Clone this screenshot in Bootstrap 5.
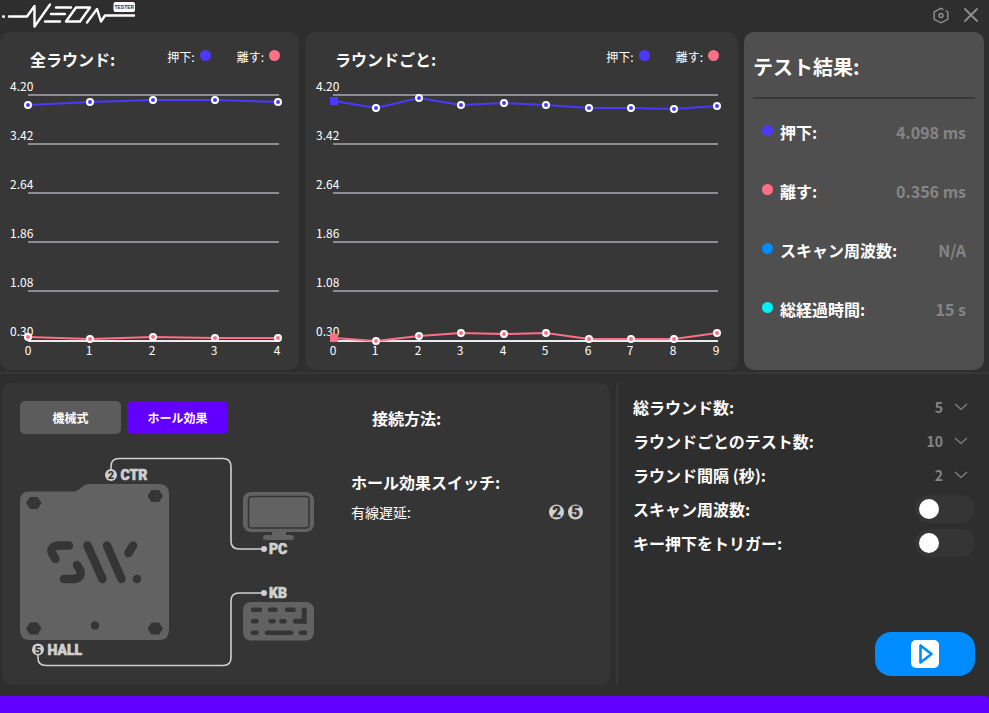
<!DOCTYPE html>
<html lang="ja">
<head>
<meta charset="utf-8">
<meta name="viewport" content="width=device-width, initial-scale=1">
<title>NEON Tester</title>
<link href="https://cdn.jsdelivr.net/npm/bootstrap@5.3.0/dist/css/bootstrap.min.css" rel="stylesheet">
<style>
body{background:#2e2e2e;color:#fff;font-family:"Noto Sans CJK JP",sans-serif;font-size:16px;line-height:24px}
svg{display:block}
h1,h2{font-size:16px;line-height:24px;font-weight:700;margin:0}
.titlebar{height:32px;padding:0 10px 0 0}
.title-actions{gap:11px}
.icon-btn{border:0;background:none;padding:0;color:#8f8f8f}
.top-row{gap:6px;padding-right:5px}
.panel{background:#373737;border-radius:10px;min-width:0;flex:1 1 0}
.panel-rounds{flex-grow:299}
.panel-tests{flex-grow:433}
.panel-results{flex-grow:222;background:#4f4f4f;padding:20px 9px}
.panel-head{height:44px;padding:15px 19px 0 30px}
.legend{font-size:12px;line-height:20px;gap:26px}
.legend-item{gap:5px}
.dot{width:11px;height:11px;border-radius:50%;flex:none;margin-bottom:4px}
.blue{background:#4c38ff}.pink{background:#ff6f87}.sky{background:#008cff}.cyan{background:#00f2ff}
.chart{width:100%;height:auto;font-size:12px;fill:#fff}
.gridline{stroke:#8e8c92;stroke-width:2}
.axis{stroke:#e9e9ee;stroke-width:2}
.series{fill:none;stroke-width:2}
.results-title{font-size:20px;line-height:30px;padding-bottom:15px;border-bottom:2px solid #373737}
.result-list{padding:21px 9px 0;gap:35px}
.result-name{gap:7px}
.value{color:#858585;font-weight:700}
.rule{height:2px;background:#373737;margin:2px 0 9px}
.bottom-row{padding:0 14px 11px 2px;gap:6px}
.wiring{flex:563 1 0;background:#353535;border-radius:10px;padding:18px 27px 17px 18px;gap:36px}
.tabs{gap:6px}
.tab-btn{width:101px;height:33px;border:0;border-radius:5px;background:#5c5c5c;color:#fff;font-size:12px;font-weight:700;line-height:18px}
.tab-btn.active{background:#6200ff}
.diagram{margin-top:22px}
.diagram text{font:900 14px Roboto,sans-serif;fill:#d0d0d0}
.diagram .node-name{stroke:#d0d0d0;stroke-width:.6px}
.diagram .pin-no{font-size:11px;fill:#353535;text-anchor:middle}
.method-title{padding:5px 0 0 21px;margin-bottom:40px}
.small-label{font-size:14px;line-height:20px}
.settings{flex:342 1 0;border-left:2px solid #373737;padding:7px 0 9px 15px}
.setting{height:34px}
.setting label{font-weight:700}
.picker{gap:11px;padding-right:7px}
.picker select{appearance:none;background:none;border:0;color:#858585;font:700 14px "Noto Sans CJK JP",sans-serif;text-align-last:right;padding:0;width:50px}
.picker select option{color:#222}
.toggle{appearance:none;width:60px;height:28px;border-radius:14px;background:#353535;padding:4px;margin:0}
.toggle::before{content:"";display:block;width:20px;height:20px;border-radius:50%;background:#fff}
.toggle:checked{background:#008cff}
.toggle:checked::before{margin-left:auto}
.start-btn{width:100px;height:44px;border:0;border-radius:16px;background:#008cff}
.status{height:17px;background:#6200ff;border-radius:0 4px 0 0}
</style>
<script src="https://cdn.jsdelivr.net/npm/bootstrap@5.3.0/dist/js/bootstrap.bundle.min.js"></script>
</head>
<body class="d-flex flex-column min-vh-100">
<header class="titlebar d-flex justify-content-between align-items-center">
<svg width="140" height="32" role="img" aria-label="NEON Tester">
<g fill="none" stroke="#fff" stroke-width="2.4" stroke-linejoin="round" stroke-linecap="round">
<path d="M9 16.500H27L34.500 6V26.500L50 4.500"/><path d="M56 7.500H71M51 14H65M45 21.500H60"/>
<path d="M76 7.500H90L80 21.500H66Z"/><path d="M87 22.500 97 9 101 21.500 105 15.500H134"/></g>
<circle cx="3.500" cy="16.500" r="1.500" fill="#fff"/>
<rect x="113.500" y="2" width="21.500" height="10" rx="2" fill="#fff"/>
<text x="124.300" y="9" text-anchor="middle" font-family="Liberation Sans,sans-serif" font-size="5" font-weight="700" fill="#333">TESTER</text>
</svg>
<div class="title-actions d-flex align-items-center">
<button class="icon-btn" type="button" aria-label="設定"><svg width="22" height="22" fill="none" stroke="currentColor" stroke-width="1.400" stroke-linecap="round"><path d="M13 4.300 11 3.300 4.200 7V14.300L11 17.800 17.800 14.300V7L16 6"/><circle cx="11" cy="10.500" r="2"/></svg></button>
<button class="icon-btn" type="button" aria-label="閉じる"><svg width="16" height="22" fill="none" stroke="currentColor" stroke-width="1.800" stroke-linecap="round"><path d="M2 4 14 16M14 4 2 16"/></svg></button>
</div>
</header>

<main class="flex-grow-1 d-flex flex-column">
<div class="top-row d-flex">
<section class="panel panel-rounds">
<div class="panel-head d-flex justify-content-between align-items-start">
<h1>全ラウンド:</h1>
<div class="legend d-flex"><span class="legend-item d-flex align-items-center">押下:<i class="dot blue"></i></span><span class="legend-item d-flex align-items-center">離す:<i class="dot pink"></i></span></div>
</div>
<svg class="chart" viewBox="0 0 299 294" role="img" aria-label="全ラウンド">
<defs>
<marker id="ptBlue" markerUnits="userSpaceOnUse" markerWidth="10" markerHeight="10" refX="5" refY="5"><circle cx="5" cy="5" r="3" fill="#4c38ff" stroke="#fff" stroke-width="2"/></marker>
<marker id="ptPink" markerUnits="userSpaceOnUse" markerWidth="10" markerHeight="10" refX="5" refY="5"><circle cx="5" cy="5" r="3" fill="#ff6f87" stroke="#fff" stroke-width="2"/></marker>
<marker id="sqBlue" markerUnits="userSpaceOnUse" markerWidth="8" markerHeight="8" refX="4" refY="4"><path d="M0 0H8V8H0Z" fill="#4c38ff"/></marker>
<marker id="sqPink" markerUnits="userSpaceOnUse" markerWidth="8" markerHeight="8" refX="4" refY="4"><path d="M0 0H8V8H0Z" fill="#ff6f87"/></marker>
</defs>
<path class="gridline" d="M28 19H279M28 68H279M28 117H279M28 166H279M28 215H279"/>
<path class="axis" d="M28 265H279"/>
<g><text x="10" y="15">4.20</text><text x="10" y="64">3.42</text><text x="10" y="113">2.64</text><text x="10" y="162">1.86</text><text x="10" y="211">1.08</text><text x="10" y="260">0.30</text></g>
<g text-anchor="middle"><text x="28" y="279">0</text><text x="89" y="279">1</text><text x="152" y="279">2</text><text x="214" y="279">3</text><text x="277" y="279">4</text></g>
<polyline class="series" stroke="#4c38ff" marker-start="url(#ptBlue)" marker-mid="url(#ptBlue)" marker-end="url(#ptBlue)" points="28,29 90,26 153,24 215,24 278,26"/>
<polyline class="series" stroke="#ff6f87" marker-start="url(#ptPink)" marker-mid="url(#ptPink)" marker-end="url(#ptPink)" points="28,261 90,263 153,261 215,262 278,262"/>
</svg>
</section>

<section class="panel panel-tests">
<div class="panel-head d-flex justify-content-between align-items-start">
<h1>ラウンドごと:</h1>
<div class="legend d-flex"><span class="legend-item d-flex align-items-center">押下:<i class="dot blue"></i></span><span class="legend-item d-flex align-items-center">離す:<i class="dot pink"></i></span></div>
</div>
<svg class="chart" viewBox="0 0 433 294" role="img" aria-label="ラウンドごと">
<path class="gridline" d="M28 19H413M28 68H413M28 117H413M28 166H413M28 215H413"/>
<path class="axis" d="M28 265H413"/>
<g><text x="11" y="15">4.20</text><text x="11" y="64">3.42</text><text x="11" y="113">2.64</text><text x="11" y="162">1.86</text><text x="11" y="211">1.08</text><text x="11" y="260">0.30</text></g>
<g text-anchor="middle"><text x="28" y="279">0</text><text x="70" y="279">1</text><text x="113" y="279">2</text><text x="155" y="279">3</text><text x="198" y="279">4</text><text x="240" y="279">5</text><text x="283" y="279">6</text><text x="325" y="279">7</text><text x="368" y="279">8</text><text x="411" y="279">9</text></g>
<polyline class="series" stroke="#4c38ff" marker-start="url(#sqBlue)" marker-mid="url(#ptBlue)" marker-end="url(#ptBlue)" points="29,25 71,32 114,22 156,29 199,27 241,29 284,32 326,32 369,33 412,30"/>
<polyline class="series" stroke="#ff6f87" marker-start="url(#sqPink)" marker-mid="url(#ptPink)" marker-end="url(#ptPink)" points="29,262 71,265 114,260 156,257 199,258 241,257 284,263 326,263 369,263 412,257"/>
</svg>
</section>

<section class="panel panel-results">
<h2 class="results-title">テスト結果:</h2>
<div class="result-list d-flex flex-column">
<div class="d-flex justify-content-between"><span class="result-name fw-bold d-flex align-items-center"><i class="dot blue"></i>押下:</span><span class="value">4.098 ms</span></div>
<div class="d-flex justify-content-between"><span class="result-name fw-bold d-flex align-items-center"><i class="dot pink"></i>離す:</span><span class="value">0.356 ms</span></div>
<div class="d-flex justify-content-between"><span class="result-name fw-bold d-flex align-items-center"><i class="dot sky"></i>スキャン周波数:</span><span class="value">N/A</span></div>
<div class="d-flex justify-content-between"><span class="result-name fw-bold d-flex align-items-center"><i class="dot cyan"></i>総経過時間:</span><span class="value">15 s</span></div>
</div>
</section>
</div>

<div class="rule"></div>

<div class="bottom-row d-flex flex-grow-1">
<section class="wiring d-flex">
<div>
<div class="tabs d-flex"><button class="tab-btn" type="button">機械式</button><button class="tab-btn active" type="button" aria-pressed="true">ホール効果</button></div>
<svg class="diagram" width="295" height="212" viewBox="20 456 295 212" role="img" aria-label="配線図">
<path fill="#626262" d="M29 491.500H74C80 491.500 81 484 90 484H159Q169 484 169 494V630Q169 640 159 640H30Q20 640 20 630V501Q20 491.500 29 491.500Z"/>
<g fill="#353535"><path id="hexNut" d="M26 503 30 497H37.500L41.500 503 37.500 509H30Z"/><use href="#hexNut" x="121.500" y="-7"/><use href="#hexNut" y="125.500"/><use href="#hexNut" x="121.500" y="125.500"/><circle cx="95" cy="625.500" r="4.200"/><circle cx="137" cy="579" r="4.300"/></g>
<g fill="none" stroke="#353535" stroke-width="8.500" stroke-linecap="round" stroke-linejoin="round"><path d="M69 545.500H59C52 545.500 50 550 52.500 554L55.500 559M77 565 80 570C82 575 79 579 74 579H64M87.500 545.500 102.500 579M107 545.500 121.500 579M133 545.500 128.500 553"/></g>
<g fill="none" stroke="#d0d0d0" stroke-width="1.600"><path d="M111 470V466.500Q111 458.500 119 458.500H223Q231 458.500 231 467V541Q231 549 239 549H264"/><path d="M38 654V658Q38 665.500 46 665.500H223Q231 665.500 231 657.500V601Q231 593 239 593H264"/></g>
<g fill="#d0d0d0"><circle cx="264" cy="549" r="3"/><circle cx="264" cy="593" r="3"/><circle cx="111" cy="475" r="6"/><circle cx="38" cy="649.500" r="6"/></g>
<text class="node-name" x="120.500" y="480">CTR</text><text class="node-name" x="47.500" y="655">HALL</text><text class="node-name" x="269" y="554">PC</text><text class="node-name" x="269" y="598">KB</text>
<text class="pin-no" x="111" y="479">2</text><text class="pin-no" x="38" y="653.500">5</text>
<rect x="243" y="492" width="71" height="40" rx="8" fill="#626262"/><rect x="248.500" y="496.500" width="60.500" height="31.500" rx="3" fill="#626262" stroke="#353535" stroke-width="1.600"/>
<path fill="#626262" d="M272 532H286V535H291Q294 535 294 537.500T291 540H266Q263 540 263 537.500T266 535H272Z"/>
<rect x="243" y="602" width="71" height="38.500" rx="8" fill="#626262"/>
<g fill="none" stroke="#353535" stroke-width="4.600" stroke-linecap="round"><path d="M253 609.700H260M270 609.700H275.500M287 609.700H293.500M253 621.200H256.500M270.500 621.200H273.500M281.500 621.200H284.500M253 632.800H256.500M267 632.800H291M301 632.800H305"/></g>
<path d="M295.500 621.200H304.200V610" fill="none" stroke="#353535" stroke-width="5" stroke-linecap="round"/>
</svg>
</div>
<div class="flex-grow-1">
<h2 class="method-title">接続方法:</h2>
<h2>ホール効果スイッチ:</h2>
<div class="small-label d-flex justify-content-between align-items-center mt-2"><span>有線遅延:</span>
<svg width="34" height="16" role="img" aria-label="2 5"><g fill="#d0d0d0"><circle cx="7.500" cy="8" r="7.500"/><circle cx="26.500" cy="8" r="7.500"/></g><g font-family="Roboto,sans-serif" font-size="14" font-weight="900" text-anchor="middle" fill="#353535" stroke="#353535" stroke-width=".6"><text x="7.500" y="13">2</text><text x="26.500" y="13">5</text></g></svg></div>
</div>
</section>

<section class="settings d-flex flex-column">
<div class="setting d-flex justify-content-between align-items-center"><label for="rounds">総ラウンド数:</label><span class="picker d-flex align-items-center"><select id="rounds"><option>5</option><option>10</option></select><svg width="14" height="10" fill="none" stroke="#858585" stroke-width="1.200"><path d="M1 2 7 7.500 13 2"/></svg></span></div>
<div class="setting d-flex justify-content-between align-items-center"><label for="tests">ラウンドごとのテスト数:</label><span class="picker d-flex align-items-center"><select id="tests"><option>10</option><option>20</option></select><svg width="14" height="10" fill="none" stroke="#858585" stroke-width="1.200"><path d="M1 2 7 7.500 13 2"/></svg></span></div>
<div class="setting d-flex justify-content-between align-items-center"><label for="pause">ラウンド間隔 (秒):</label><span class="picker d-flex align-items-center"><select id="pause"><option>2</option><option>5</option></select><svg width="14" height="10" fill="none" stroke="#858585" stroke-width="1.200"><path d="M1 2 7 7.500 13 2"/></svg></span></div>
<div class="setting d-flex justify-content-between align-items-center"><label for="scan">スキャン周波数:</label><input class="toggle" type="checkbox" role="switch" id="scan"></div>
<div class="setting d-flex justify-content-between align-items-center"><label for="trigger">キー押下をトリガー:</label><input class="toggle" type="checkbox" role="switch" id="trigger"></div>
<button class="start-btn d-flex align-items-center justify-content-center align-self-end mt-auto" type="button" aria-label="開始"><svg width="28" height="28"><rect width="28" height="28" rx="5" fill="#fff"/><path d="M9.500 5.500V22.500L20.500 14Z" fill="none" stroke="#008cff" stroke-width="2.600" stroke-linejoin="round"/></svg></button>
</section>
</div>
</main>
<footer class="status"></footer>
</body>
</html>
